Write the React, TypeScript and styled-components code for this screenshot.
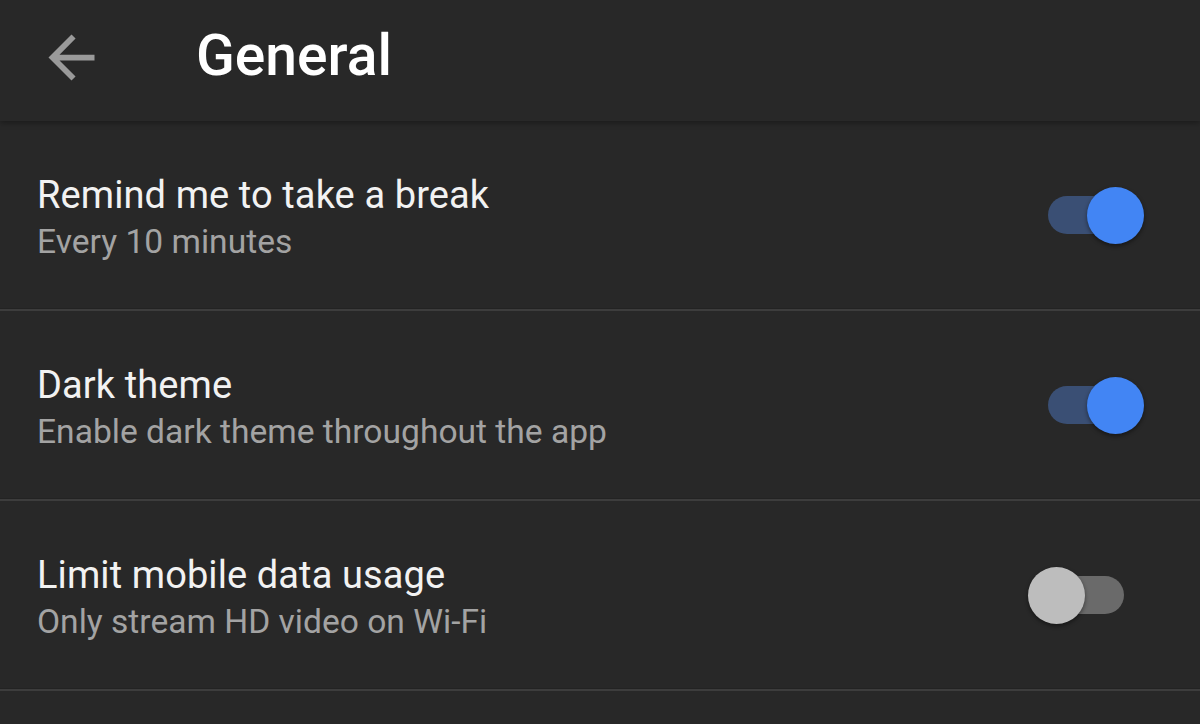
import * as React from 'react';
import styled, { createGlobalStyle } from 'styled-components';

const GlobalStyle = createGlobalStyle`
  html, body {
    margin: 0;
    padding: 0;
    background: #282828;
  }
  body {
    font-family: Roboto, "Noto Sans", Arial, sans-serif;
    -webkit-font-smoothing: antialiased;
  }
`;

const Page = styled.div`
  width: 1200px;
  height: 724px;
  overflow: hidden;
  background: #282828;
`;

const Header = styled.header`
  position: relative;
  z-index: 1;
  height: 121px;
  display: flex;
  align-items: center;
  background: #282828;
  box-shadow: 0 2px 6px rgba(0, 0, 0, 0.35);
`;

const BackButton = styled.button`
  width: 69px;
  height: 69px;
  margin: -6px 0 0 37px;
  padding: 0;
  border: none;
  background: none;
  color: #9a9a9a;
  display: flex;
  cursor: pointer;

  svg {
    width: 69px;
    height: 69px;
  }
`;

const Title = styled.h1`
  margin: -10px 0 0 90px;
  font-size: 57px;
  font-weight: 500;
  color: #ffffff;
  letter-spacing: 0;
`;

const List = styled.ul`
  margin: 0;
  padding: 0;
  list-style: none;
`;

const Row = styled.li`
  display: flex;
  align-items: center;
  justify-content: space-between;
  padding: 51px 76px 43px 37px;
  border-bottom: 2px solid #3d3d3d;
  box-shadow: inset 0 -1px 0 #232323;
`;

const Texts = styled.div`
  display: flex;
  flex-direction: column;
`;

const RowTitle = styled.span`
  font-size: 38px;
  line-height: 46px;
  letter-spacing: 0.1px;
  color: #f2f2f2;
`;

const RowSubtitle = styled.span`
  font-size: 33.6px;
  line-height: 48px;
  color: #a3a3a3;
`;

const Track = styled.div<{ $on: boolean }>`
  position: relative;
  width: 76px;
  height: 38px;
  margin-top: -8px;
  border-radius: 19px;
  background: ${(p) => (p.$on ? '#3a4f74' : '#6a6a6a')};
  flex-shrink: 0;
`;

const Knob = styled.span<{ $on: boolean }>`
  position: absolute;
  top: 50%;
  left: ${(p) => (p.$on ? '39px' : '-20px')};
  width: 57px;
  height: 57px;
  margin-top: -28px;
  border-radius: 50%;
  background: ${(p) => (p.$on ? '#4285f4' : '#bdbdbd')};
  box-shadow: 0 2px 4px rgba(0, 0, 0, 0.45);
`;

const settings = [
  { title: 'Remind me to take a break', sub: 'Every 10 minutes', on: true },
  { title: 'Dark theme', sub: 'Enable dark theme throughout the app', on: true },
  { title: 'Limit mobile data usage', sub: 'Only stream HD video on Wi-Fi', on: false },
];

const App: React.FC = () => {
  return (
    <Page>
      <GlobalStyle />
      <Header>
        <BackButton aria-label="Back">
          <svg viewBox="0 0 24 24" fill="currentColor">
            <path d="M20 11H7.83l5.59-5.59L12 4l-8 8 8 8 1.41-1.41L7.83 13H20v-2z" />
          </svg>
        </BackButton>
        <Title>General</Title>
      </Header>
      <List>
        {settings.map((s) => (
          <Row key={s.title}>
            <Texts>
              <RowTitle>{s.title}</RowTitle>
              <RowSubtitle>{s.sub}</RowSubtitle>
            </Texts>
            <Track $on={s.on}>
              <Knob $on={s.on} />
            </Track>
          </Row>
        ))}
      </List>
    </Page>
  );
};

export default App;
